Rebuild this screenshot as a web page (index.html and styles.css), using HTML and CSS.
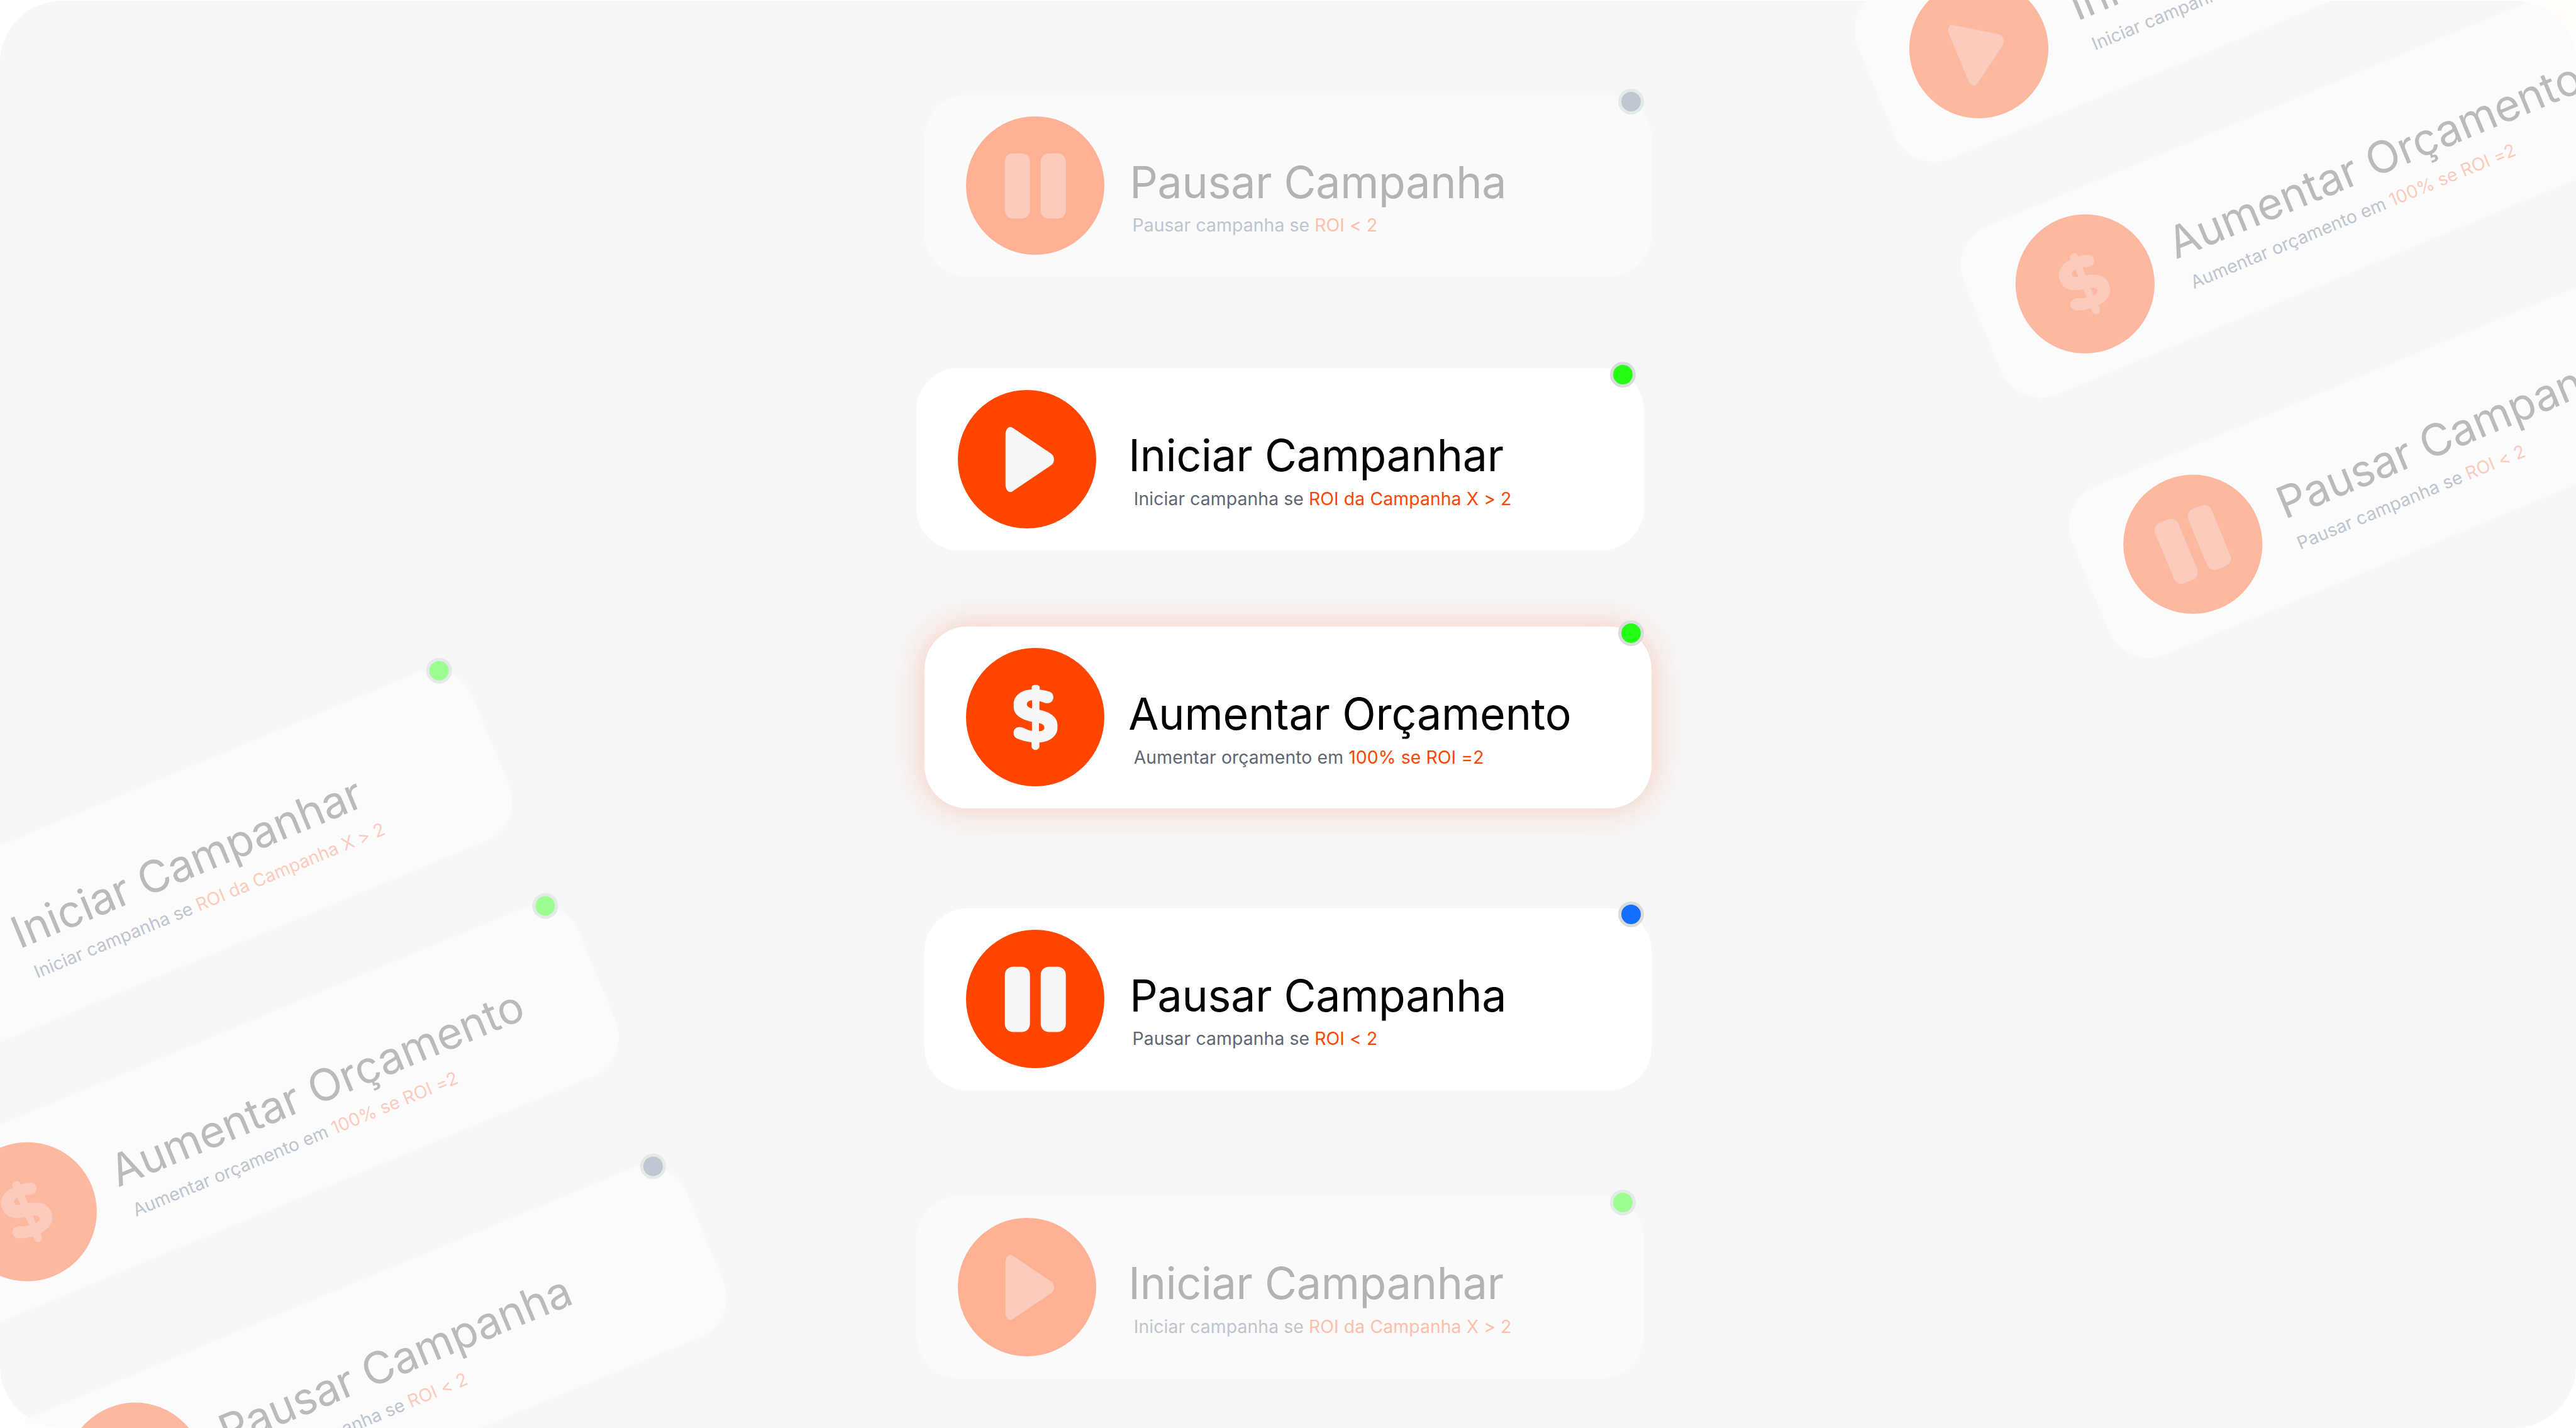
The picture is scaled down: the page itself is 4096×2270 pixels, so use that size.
FILE: index.html
```
<!DOCTYPE html>
<html lang="pt-BR">
<head>
	<meta charset="utf-8">
	<title>Campanhas</title>
	<link rel="stylesheet" href="styles.css">
</head>
<body>
	<!-- icon shapes -->
	<svg class="sprite" width="0" height="0">
		<symbol id="play" viewBox="0 0 323 323">
			<path d="M111 103C111 93 117 86 122 86C125 86 127 87.500 130 89.500L217 148C222 151.500 224 156 224 162C224 168 222 172 217 175.500L130 234C127 236.500 125 237.700 122 237.700C117 237.700 111 231 111 220Z"/>
		</symbol>
		<symbol id="pause" viewBox="0 0 323 323">
			<rect x="90.500" y="86" width="58.500" height="152" rx="19"/>
			<rect x="174" y="86" width="58.500" height="152" rx="19"/>
		</symbol>
		<symbol id="money" viewBox="0 0 323 323">
			<path fill-rule="evenodd" d="M153 96.500V92C153 88 157 86 162 86C167.500 86 171.700 88 171.700 92V97C181 98 191 100 197 103C201.500 105.500 203.500 110 203.500 115.300C203.500 123 197 128.700 189.300 128.700C182 128.700 178 125 171 123.700V144C195 149 213 161 213 179V186C213 204 196 219 171 220V228.700C171 233.700 166.800 237.700 161.800 237.700C156.700 237.700 152.700 233.700 152.700 228.700V219.700C141 218.500 129 215.500 119 211C114 208.500 111 204 111 200V196C111 189.500 117.500 184.300 125 184.300C135 184.300 139 191.500 153.700 193V172C126 166.500 111 154 111 137V130C111 111.500 129 97.500 153 96.500ZM154 122C147 122 141.700 126 141.700 131.300C141.700 135.500 147 139.700 154 140.700ZM170 175V194C177.500 194 182.700 190.500 182.700 185.300C182.700 180 177.500 176 170 175Z"/>
		</symbol>
	</svg>

	<main class="frame">
		<div class="stack stack-main">
			<div class="card pausar faded">
				<span class="dot"></span>
				<div class="icon"><svg><use href="#pause"/></svg></div>
				<div class="text">
					<h2>Pausar Campanha</h2>
					<p>Pausar campanha se <b>ROI &lt; 2</b></p>
				</div>
			</div>
			<div class="card iniciar">
				<span class="dot"></span>
				<div class="icon"><svg><use href="#play"/></svg></div>
				<div class="text">
					<h2>Iniciar Campanhar</h2>
					<p>Iniciar campanha se <b>ROI da Campanha X &gt; 2</b></p>
				</div>
			</div>
			<div class="card aumentar glow">
				<span class="dot"></span>
				<div class="icon"><svg><use href="#money"/></svg></div>
				<div class="text">
					<h2>Aumentar Orçamento</h2>
					<p>Aumentar orçamento em <b>100% se ROI =2</b></p>
				</div>
			</div>
			<div class="card pausar">
				<span class="dot"></span>
				<div class="icon"><svg><use href="#pause"/></svg></div>
				<div class="text">
					<h2>Pausar Campanha</h2>
					<p>Pausar campanha se <b>ROI &lt; 2</b></p>
				</div>
			</div>
			<div class="card iniciar last faded">
				<span class="dot"></span>
				<div class="icon"><svg><use href="#play"/></svg></div>
				<div class="text">
					<h2>Iniciar Campanhar</h2>
					<p>Iniciar campanha se <b>ROI da Campanha X &gt; 2</b></p>
				</div>
			</div>
		</div>
	</main>

	<!-- tilted copies, bottom left -->
	<div class="stack tilted tilted-left">
		<div class="card iniciar faded">
			<span class="dot"></span>
			<div class="icon"><svg><use href="#play"/></svg></div>
			<div class="text">
				<h2>Iniciar Campanhar</h2>
				<p>Iniciar campanha se <b>ROI da Campanha X &gt; 2</b></p>
			</div>
		</div>
		<div class="card aumentar faded">
			<span class="dot"></span>
			<div class="icon"><svg><use href="#money"/></svg></div>
			<div class="text">
				<h2>Aumentar Orçamento</h2>
				<p>Aumentar orçamento em <b>100% se ROI =2</b></p>
			</div>
		</div>
		<div class="card pausar faded">
			<span class="dot"></span>
			<div class="icon"><svg><use href="#pause"/></svg></div>
			<div class="text">
				<h2>Pausar Campanha</h2>
				<p>Pausar campanha se <b>ROI &lt; 2</b></p>
			</div>
		</div>
	</div>

	<!-- tilted copies, top right -->
	<div class="stack tilted tilted-right">
		<div class="card iniciar faded">
			<span class="dot"></span>
			<div class="icon"><svg><use href="#play"/></svg></div>
			<div class="text">
				<h2>Iniciar Campanhar</h2>
				<p>Iniciar campanha se <b>ROI da Campanha X &gt; 2</b></p>
			</div>
		</div>
		<div class="card aumentar faded">
			<span class="dot"></span>
			<div class="icon"><svg><use href="#money"/></svg></div>
			<div class="text">
				<h2>Aumentar Orçamento</h2>
				<p>Aumentar orçamento em <b>100% se ROI =2</b></p>
			</div>
		</div>
		<div class="card pausar faded">
			<span class="dot"></span>
			<div class="icon"><svg><use href="#pause"/></svg></div>
			<div class="text">
				<h2>Pausar Campanha</h2>
				<p>Pausar campanha se <b>ROI &lt; 2</b></p>
			</div>
		</div>
	</div>
</body>
</html>
```
FILE: styles.css
```
*{
	box-sizing:border-box;
}

body{
	--card:#fff;
	--accent:#ff4500;
	--symbol:#f7f7f7;
	--title:#000;
	--sub:#5e6673;
	--link:#ff4500;
	--ring:#d8dddb;
	--green:#24fd14;
	--blue:#146eff;

	position:relative;
	width:4096px;
	height:2270px;
	margin:0;
	overflow:hidden;
	font-family:Inter, "Liberation Sans", sans-serif;
	/* pale tint showing behind the rounded corners */
	background:
		linear-gradient(#fffaf8, #fffaf8) 4023px 0 / 73px 100px no-repeat,
		linear-gradient(#fffaf8, #fffaf8) 40px 2255px / 60px 15px no-repeat,
		#fff;
}

.sprite{
	position:absolute;
}

.frame{
	height:2270px;
	padding-top:150.2px;
	border-top:1px solid #fff;
	border-radius:99px;
	background:#f7f7f7;
	background-clip:padding-box;
}

.stack{
	display:flex;
	flex-direction:column;
	width:1156.8px;
}

	.stack-main{
		margin:-.5px auto 0;
	}

.card{
	position:relative;
	display:flex;
	flex:none;
	width:1156.8px;
	height:289.4px;
	padding-left:66px;
	border-radius:68px;
	background:var(--card);
}

	.iniciar{
		left:-12.8px;
	}

	.pausar + .iniciar{
		margin-top:145.4px;
	}

	.iniciar + .aumentar{
		margin-top:120.9px;
	}

	.aumentar + .pausar{
		margin-top:158.5px;
	}

	.pausar + .last{
		margin-top:168.4px;
	}

	.glow{
		box-shadow:0 0 56px rgba(255,69,0,.25);
	}

/* status dot on the top right corner of a card */
.dot{
	position:absolute;
	top:-10.2px;
	right:12.8px;
	width:41px;
	height:41px;
	border:5.1px solid var(--ring);
	border-radius:50%;
	background:var(--green);
}

	.pausar .dot{
		background:var(--blue);
	}

.icon{
	flex:none;
	width:220.5px;
	height:220.5px;
	margin-top:34.1px;
	border-radius:50%;
	background:var(--accent);
}

	.icon svg{
		display:block;
		width:100%;
		height:100%;
		fill:var(--symbol);
	}

.text{
	padding:98.9px 0 0 38.2px;
	white-space:nowrap;
}

	.iniciar .text{
		padding-left:51px;
	}

	.pausar .text{
		padding-left:40.2px;
	}

h2{
	margin:0;
	font-size:69.9px;
	font-weight:400;
	line-height:80px;
	letter-spacing:-.3px;
	color:var(--title);
}

	.aumentar h2{
		letter-spacing:-.15px;
	}

p{
	margin:10.9px 0 0 8.4px;
	font-size:28.4px;
	line-height:36px;
	letter-spacing:.07px;
	color:var(--sub);
}

	.pausar p{
		margin-left:4.2px;
	}

b{
	font-weight:400;
	color:var(--link);
}

.faded{
	--card:#fafafa;
	--accent:#ffb196;
	--symbol:#fbccbe;
	--title:#b3b3b3;
	--sub:#bec5cf;
	--link:#ffbfaa;
	--ring:#e4eae8;
	--green:#9efd91;
	--blue:#c1c7d2;
}

.tilted{
	position:absolute;
	transform:rotate(-22.5deg);
	transform-origin:175.9px 554.7px;
}

	.tilted .faded{
		--card:rgba(255,255,255,.45);
		--accent:#fdb8a0;
		--title:#bbb;
		--link:#fbccbe;
	}

	.tilted-left{
		top:1372px;
		left:-132.8px;
	}

	.tilted-right{
		top:-102.6px;
		left:3139px;
	}
```
